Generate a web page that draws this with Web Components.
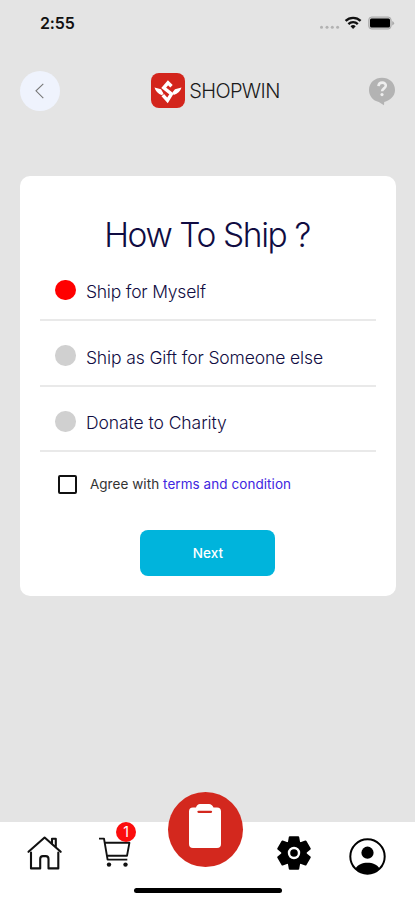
<!DOCTYPE html>
<html lang="en">
<head>
<meta charset="UTF-8">
<meta name="viewport" content="width=device-width, initial-scale=1">
<title>Shopwin</title>
<style>
    body {
        margin: 0;
        background: #e4e4e4;
        font-family: Inter, "Liberation Sans", sans-serif;
    }
</style>
</head>
<body>
<sw-screen>
    <sw-status-bar slot="top" time="2:55"></sw-status-bar>
    <sw-header slot="top">SHOPWIN</sw-header>
    <sw-card heading="How To Ship ?">
        <sw-option checked>Ship for Myself</sw-option>
        <sw-option style="--track: -.12px">Ship as Gift for Someone else</sw-option>
        <sw-option style="--track: -.06px">Donate to Charity</sw-option>
        <sw-agree slot="footer">Agree with <span slot="link">terms and condition</span></sw-agree>
        <sw-button slot="footer">Next</sw-button>
    </sw-card>
    <sw-tab-bar slot="bottom" count="1"></sw-tab-bar>
</sw-screen>

<script>
class SWElement extends HTMLElement {
    constructor() {
        super();
        this.attachShadow({mode: 'open'});
        this.shadowRoot.innerHTML = this.render();
    }
}

class SWScreen extends SWElement {
    render() {
        return `
            <style>
                :host {
                    display: flex;
                    flex-direction: column;
                    height: 900px;
                    overflow: hidden;
                }
                main {
                    flex: 1;
                    padding: 52.4px 19.5px 0 20.4px;
                }
            </style>
            <slot name="top"></slot>
            <main><slot></slot></main>
            <slot name="bottom"></slot>
        `;
    }
}

class SWStatusBar extends SWElement {
    render() {
        return `
            <style>
                :host {
                    display: flex;
                    align-items: center;
                    justify-content: space-between;
                    height: 46px;
                    padding: 0 20px 0 40px;
                    color: #111;
                }
                .time {
                    font-size: 16px;
                    font-weight: 600;
                    letter-spacing: -.1px;
                }
                svg { display: block; }
            </style>
            <span class="time">${this.getAttribute('time')}</span>
            <svg width="76" height="16" viewBox="319 15 76 16">
                <g fill="#b2b2b2">
                    <circle cx="321.5" cy="27.3" r="1.5"/><circle cx="327" cy="27.3" r="1.5"/>
                    <circle cx="332.3" cy="27.3" r="1.5"/><circle cx="337.6" cy="27.3" r="1.5"/>
                </g>
                <g fill="none" stroke="#111" stroke-width="2.3">
                    <path d="M345.6 20.9a10.6 10.6 0 0 1 15 0"/>
                    <path d="M348.4 24.1a6.7 6.7 0 0 1 9.4 0"/>
                </g>
                <path d="M350.5 26.3a3.8 3.8 0 0 1 5.2 0l-2.6 2.8z" fill="#111"/>
                <rect x="368.7" y="17" width="22.4" height="12" rx="3" fill="#c9c9c9" stroke="#aaa"/>
                <rect x="370" y="18.6" width="20" height="8.9" rx="1.5" fill="#000"/>
                <path d="M392.2 21v4.4q1.9-.7 1.9-2.2t-1.9-2.2z" fill="#aaa"/>
            </svg>
        `;
    }
}

class SWHeader extends SWElement {
    render() {
        return `
            <style>
                :host {
                    display: grid;
                    grid-template-columns: 40px 1fr 28px;
                    align-items: center;
                    box-sizing: border-box;
                    height: 66px;
                    margin-top: 12px;
                    padding: 0 19px 0 20px;
                }
                .back {
                    width: 40px;
                    height: 40px;
                    padding: 0;
                    border: 0;
                    border-radius: 50%;
                    background: #eff3fd;
                }
                .brand {
                    display: flex;
                    align-items: center;
                    justify-content: center;
                    gap: 4px;
                    padding-left: 3px;
                    line-height: 35px;
                    font-size: 20px;
                    font-weight: 300;
                    letter-spacing: -.65px;
                    color: #1a1a1a;
                }
                .brand svg { margin-top: -2px; }
                svg { display: block; }
            </style>
            <button class="back" aria-label="Back">
                <svg width="40" height="40" fill="none" stroke="#777" stroke-width="1.1"><path d="M23.3 12.8 16 19.8l7.3 7.4"/></svg>
            </button>
            <div class="brand">
                <svg width="34" height="35" viewBox="0 0 34 35">
                    <rect width="34" height="35" rx="8" fill="#d3251c"/>
                    <path d="M3.5 14.5l6.500 1.800 2.500 4.200-1.500 1.800Q5 20 3.500 14.500zM30.500 14.500l-6.500 1.800-2.500 3 1.200 2.700Q29 20 30.500 14.500z" fill="#fff"/>
                    <path d="M20.500 13.300 17 9.800l-4.300 5 7.800 6.200-4 6.500-4.700-5.300" fill="none" stroke="#fff" stroke-width="3.400"/>
                </svg>
                <span><slot></slot></span>
            </div>
            <svg class="help" width="28" height="29" viewBox="0 0 28 29">
                <path d="M14 .8C21 .8 27 5.5 27 13c0 6-4.500 10.200-10.800 11.900L16 28.300 10.800 25C5 23.700 1 19 1 13 1 5.500 7 .8 14 .8z" fill="#b3b3b3"/>
                <path d="M10.500 9.100c.2-4.700 7.600-4.500 7.300-.3-.1 2.500-3.700 2.700-3.700 5.500" fill="none" stroke="#eee" stroke-width="2.600"/>
                <circle cx="14" cy="17.600" r="1.600" fill="#eee"/>
            </svg>
        `;
    }
}

class SWCard extends SWElement {
    render() {
        return `
            <style>
                :host {
                    display: block;
                    box-sizing: border-box;
                    height: 419.5px;
                    padding: 36px 20px 0;
                    border-radius: 10px;
                    background: #fff;
                }
                h1 {
                    margin: 0 0 -.5px -2px;
                    font-size: 33.5px;
                    line-height: 46px;
                    font-weight: 300;
                    letter-spacing: -1.4px;
                    text-align: center;
                    color: #100c42;
                }
            </style>
            <h1>${this.getAttribute('heading')}</h1>
            <slot></slot>
            <slot name="footer"></slot>
        `;
    }
}

class SWOption extends SWElement {
    render() {
        return `
            <style>
                :host {
                    display: flex;
                    align-items: center;
                    gap: 10px;
                    box-sizing: border-box;
                    height: 65.8px;
                    padding: 5.5px 0 0 15px;
                    border-bottom: 2px solid #e9e9e9;
                    font-size: 17.5px;
                    font-weight: 300;
                    letter-spacing: var(--track, -.2px);
                    color: #100c42;
                }
                :host([checked]) {
                    height: 63px;
                    padding-top: 3px;
                }
                i {
                    width: 20.5px;
                    height: 20.5px;
                    border-radius: 50%;
                    background: #d0d0d0;
                }
                :host([checked]) i { background: #f00; }
                span { padding-top: 3px; }
            </style>
            <i></i><span><slot></slot></span>
        `;
    }
}

class SWAgree extends SWElement {
    render() {
        return `
            <style>
                :host {
                    display: flex;
                    align-items: center;
                    gap: 13px;
                    height: 64px;
                    padding-left: 17.5px;
                    font-size: 13.5px;
                    letter-spacing: .06px;
                    color: #333;
                }
                .box {
                    width: 15px;
                    height: 15px;
                    border: 2px solid #111;
                    border-radius: 2px;
                }
                .link { color: #4026e0; }
            </style>
            <div class="box"></div>
            <div class="text"><slot></slot><span class="link"><slot name="link"></slot></span></div>
        `;
    }
}

class SWButton extends SWElement {
    render() {
        return `
            <style>
                :host {
                    display: block;
                    width: 135px;
                    margin: 13.4px auto 0;
                }
                button {
                    width: 100%;
                    height: 46px;
                    padding: 0;
                    border: 0;
                    border-radius: 8px;
                    background: #00b4dc;
                    color: #fff;
                    font: 500 13.5px Inter, sans-serif;
                }
            </style>
            <button><slot></slot></button>
        `;
    }
}

class SWTabBar extends SWElement {
    render() {
        return `
            <style>
                :host {
                    display: block;
                    height: 78px;
                    background: #fff;
                }
                nav {
                    display: grid;
                    grid-template-columns: 89px 78px 77px 100px 47px;
                    height: 66px;
                }
                nav > * {
                    display: flex;
                    position: relative;
                }
                svg { display: block; overflow: visible; }
                .home { padding: 14px 0 0 27px; }
                .cart { padding: 15px 0 0 9px; }
                .gear { padding: 13px 0 0 32px; }
                .user { padding: 16px 0 0 5px; }
                .badge {
                    position: absolute;
                    left: 27px;
                    top: 0;
                    width: 20px;
                    height: 20px;
                    border-radius: 50%;
                    background: #fb0d0d;
                    color: #fff;
                    font-size: 14px;
                    line-height: 19px;
                    text-align: center;
                }
                .main {
                    justify-content: center;
                    align-items: flex-start;
                    box-sizing: border-box;
                    width: 75px;
                    height: 75px;
                    margin: -30px 0 0 1px;
                    padding: 12px 2px 0 0;
                    border-radius: 50%;
                    background: #d3281e;
                }
                .bar {
                    width: 148px;
                    height: 4.5px;
                    margin: 0 auto;
                    border-radius: 3px;
                    background: #000;
                }
            </style>
            <nav>
                <div class="home">
                    <svg width="36" height="34" viewBox="0 0 36 34" fill="none" stroke="#111" stroke-width="2.100" stroke-linejoin="round" stroke-linecap="round">
                        <path d="M4 16.500v15.900h9.200v-9.500q0-2.800 2.700-2.800h2.900q2.700 0 2.700 2.800v9.500h9.800V16.500"/>
                        <path d="M1.500 15.800 17.600 1.500 33.700 15.800M25 7.500V2.800h3.800v8"/>
                    </svg>
                </div>
                <div class="cart">
                    <svg width="34" height="32" viewBox="0 0 34 32" fill="none" stroke="#111" stroke-width="1.900" stroke-linejoin="round">
                        <path d="M1 1.600h5l3.600 21h19.700M7.200 5.800h24.200L29 18.800H9"/>
                        <circle cx="11" cy="27.600" r="2.200" fill="#111" stroke="none"/>
                        <circle cx="27.500" cy="27.600" r="2.200" fill="#111" stroke="none"/>
                    </svg>
                    <span class="badge">${this.getAttribute('count')}</span>
                </div>
                <div class="main">
                    <svg width="32" height="44" viewBox="0 0 32 44">
                        <path d="M4 3.500h3q1-3.500 4-3.500h9q3 0 4.500 3.500H28q4 0 4 4V40q0 4-4 4H4q-4 0-4-4V7.500q0-4 4-4z" fill="#fff"/>
                        <path d="M9.500 7.800h12.500" stroke="#d3281e" stroke-width="2.300" stroke-linecap="round"/>
                    </svg>
                </div>
                <div class="gear">
                    <svg width="36" height="36" viewBox="-18 -18 36 36">
                        <g stroke="#000" stroke-width="2" stroke-linejoin="round">
                            <circle r="11.500"/>
                            <path id="tooth" d="M-5.200-10-4.200-15.800H4.200L5.200-10V10L4.200 15.800H-4.200L-5.200 10z"/>
                            <use href="#tooth" transform="rotate(60)"/>
                            <use href="#tooth" transform="rotate(120)"/>
                        </g>
                        <circle r="5" fill="#000" stroke="#fff" stroke-width="2.400"/>
                    </svg>
                </div>
                <div class="user">
                    <svg width="37" height="37" viewBox="-18.500 -18.500 37 37">
                        <circle r="17.200" fill="#fff" stroke="#000" stroke-width="2"/>
                        <circle cy="-3.800" r="6.100"/>
                        <path d="M-12 12C-10 8-5 6.200 0 6.200S10 8 12 12A17 17 0 0 1-12 12z"/>
                    </svg>
                </div>
            </nav>
            <div class="bar"></div>
        `;
    }
}

customElements.define('sw-screen', SWScreen);
customElements.define('sw-status-bar', SWStatusBar);
customElements.define('sw-header', SWHeader);
customElements.define('sw-card', SWCard);
customElements.define('sw-option', SWOption);
customElements.define('sw-agree', SWAgree);
customElements.define('sw-button', SWButton);
customElements.define('sw-tab-bar', SWTabBar);
</script>
</body>
</html>
